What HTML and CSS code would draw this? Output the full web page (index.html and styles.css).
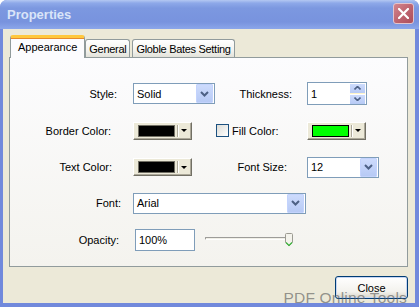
FILE: index.html
```html
<!DOCTYPE html>
<html lang="en">
<head>
  <meta charset="UTF-8" />
  <title>Properties</title>
  <link rel="stylesheet" href="styles.css">
</head>
<body>
  <div class="window">
    <div class="titlebar">
      <span class="title">Properties</span>
      <span class="close-x">
        <svg width="11" height="11" viewBox="0 0 11 11"><path d="M1 1 L10 10 M10 1 L1 10" stroke="#fff" stroke-width="2.2" stroke-linecap="square"/></svg>
      </span>
    </div>

    <div class="client">
      <!-- tabs -->
      <div class="tabs">
        <div class="tab active">Appearance</div>
        <div class="tab">General</div>
        <div class="tab">Globle Bates Setting</div>
      </div>

      <div class="panel">
        <div class="form">
          <label class="lbl">Style:</label>
          <div class="select w-style">
            <span class="value">Solid</span>
            <span class="drop"><svg width="9" height="6" viewBox="0 0 9 6"><path d="M1 1 L4.5 4.5 L8 1" stroke="#4d6185" stroke-width="2" fill="none"/></svg></span>
          </div>
          <label class="lbl lbl2">Thickness:</label>
          <div class="spin">
            <span class="value">1</span>
            <span class="spin-btns">
              <span class="spin-btn"><svg width="7" height="4" viewBox="0 0 7 4"><path d="M0.5 3.5 L3.5 0.5 L6.5 3.5" stroke="#4d6185" stroke-width="1.6" fill="none"/></svg></span>
              <span class="spin-btn"><svg width="7" height="4" viewBox="0 0 7 4"><path d="M0.5 0.5 L3.5 3.5 L6.5 0.5" stroke="#4d6185" stroke-width="1.6" fill="none"/></svg></span>
            </span>
          </div>

          <label class="lbl lbl-border">Border Color:</label>
          <div class="color-btn">
            <span class="swatch black"></span>
            <span class="sep"></span>
            <span class="arrow"></span>
          </div>
          <label class="check-lbl"><span class="checkbox"></span>Fill Color:</label>
          <div class="color-btn">
            <span class="swatch green"></span>
            <span class="sep"></span>
            <span class="arrow"></span>
          </div>

          <label class="lbl lbl-text">Text Color:</label>
          <div class="color-btn">
            <span class="swatch black"></span>
            <span class="sep"></span>
            <span class="arrow"></span>
          </div>
          <label class="lbl lbl2 lbl-size">Font Size:</label>
          <div class="select w-size">
            <span class="value">12</span>
            <span class="drop"><svg width="9" height="6" viewBox="0 0 9 6"><path d="M1 1 L4.5 4.5 L8 1" stroke="#4d6185" stroke-width="2" fill="none"/></svg></span>
          </div>

          <label class="lbl lbl-font">Font:</label>
          <div class="select w-font">
            <span class="value">Arial</span>
            <span class="drop"><svg width="9" height="6" viewBox="0 0 9 6"><path d="M1 1 L4.5 4.5 L8 1" stroke="#4d6185" stroke-width="2" fill="none"/></svg></span>
          </div>

          <label class="lbl lbl-opacity">Opacity:</label>
          <div class="opacity-row">
            <div class="textbox">100%</div>
            <div class="slider">
              <span class="track"></span>
              <svg class="thumb" width="8" height="14" viewBox="0 0 8 14">
                <path d="M0.5 1.5 Q0.5 0.5 1.5 0.5 L6.5 0.5 Q7.5 0.5 7.5 1.5 L7.5 9.5 L4 13 L0.5 9.5 Z" fill="#f4f3ec" stroke="#9c9b92"/>
                <path d="M1 9.5 L4 12.5 L7 9.5" fill="none" stroke="#3bb53b" stroke-width="1.2"/>
              </svg>
            </div>
          </div>
        </div>
      </div>

      <div class="footer">
        <button class="btn">Close</button>
      </div>

      <div class="watermark">PDF Online Tools</div>
    </div>
  </div>
</body>
</html>
```

FILE: styles.css
```css
body {
  margin: 0;
  background-color: #fff;
  font-family: 'Liberation Sans', Arial, sans-serif;
  font-size: 11px;
  color: #000;
}
.window {
  width: 419px;
  height: 307px;
  display: flex;
  flex-direction: column;
  background-color: #7189dc;
  border-radius: 7px 7px 0 0;
  overflow: hidden;
}
.titlebar {
  height: 29px;
  flex-shrink: 0;
  display: flex;
  align-items: center;
  justify-content: space-between;
  padding: 0 5px 0 7px;
  background: linear-gradient(#b4c8f2 0, #8ea9e9 3px, #7c98e0 8px, #7893de 22px, #8ba6ea 29px);
}
.title {
  font-weight: bold;
  font-size: 13px;
  color: #d9e4f8;
  padding-bottom: 1px;
}
.close-x {
  width: 19px;
  height: 19px;
  border: 1px solid #e3c4cc;
  border-radius: 3px;
  background: linear-gradient(135deg, #d3858e, #bb5f6b 60%, #ad4e5a);
  display: flex;
  align-items: center;
  justify-content: center;
  margin-bottom: 2px;
}
.client {
  flex: 1;
  position: relative;
  margin: 0 4px 4px 3px;
  padding: 6px 7px 0 6px;
  background-color: #ece9d8;
}

/* tabs */
.tabs {
  display: flex;
  align-items: flex-end;
  height: 22px;
  margin-left: 1px;
  position: relative;
  z-index: 1;
}
.tab {
  height: 17px;
  line-height: 18px;
  padding: 0 3px;
  margin-right: 2px;
  border: 1px solid #919b9c;
  border-bottom: none;
  border-radius: 3px 3px 0 0;
  background: linear-gradient(#fff, #f3f3ef 60%, #e3e2da);
  white-space: nowrap;
  letter-spacing: -0.3px;
}
.tab.active {
  height: 20px;
  line-height: 19px;
  padding: 0 7px;
  margin-right: 0;
  margin-bottom: -1px;
  border-top: 3px solid #ffc83c;
  box-shadow: inset 0 1px 0 #e68b2c;
  background: #fcfcfe;
  letter-spacing: 0;
}
.panel {
  box-sizing: border-box;
  height: 210px;
  border: 1px solid #919b9c;
  background: linear-gradient(#fcfcfe, #f4f3ee);
  padding-top: 17px;
}

/* form grid */
.form {
  display: grid;
  grid-template-columns: 123px 82px 92px auto;
  grid-template-rows: 37px 37px 36px 36px 37px;
  align-items: center;
}
.lbl {
  grid-column: 1;
  justify-self: end;
  padding-right: 16px;
}
.lbl2 {
  grid-column: 3;
  padding-right: 15px;
}
.lbl-border { padding-right: 22px; }
.lbl-text { padding-right: 21px; }
.lbl-font { padding-right: 12px; }
.lbl-opacity { padding-right: 14px; }
.lbl-size { padding-right: 20px; }

.select, .spin, .textbox {
  box-sizing: border-box;
  display: flex;
  align-items: center;
  background: #fff;
  border: 1px solid #7f9db9;
  padding-left: 3px;
}
.select {
  height: 21px;
  padding-right: 1px;
}
.select .value, .spin .value {
  flex: 1;
}
.w-style { width: 82px; }
.w-size { width: 72px; }
.w-font {
  width: 173px;
  grid-column: 2 / 4;
}
.drop {
  width: 15px;
  height: 17px;
  border: 1px solid #c3d3fd;
  border-radius: 1px;
  background: linear-gradient(#cddbfc, #b7caf5);
  display: flex;
  align-items: center;
  justify-content: center;
}
.spin {
  width: 60px;
  height: 23px;
  padding-right: 1px;
}
.spin-btns {
  display: flex;
  flex-direction: column;
  gap: 1px;
}
.spin-btn {
  width: 15px;
  height: 9px;
  background: linear-gradient(#cddbfc, #b7caf5);
  display: flex;
  align-items: center;
  justify-content: center;
}
.spin-btn:first-child {
  border-bottom: 1px solid #fff5c8;
}

/* colour picker buttons */
.color-btn {
  box-sizing: border-box;
  width: 59px;
  height: 18px;
  display: flex;
  align-items: center;
  padding: 0 4px;
  background: #ece9d8;
  border-top: 1px solid #fff;
  border-left: 1px solid #fff;
  border-right: 1px solid #716f64;
  border-bottom: 1px solid #716f64;
  box-shadow: inset -1px -1px 0 #aca899;
}
.swatch {
  width: 40px;
  height: 10px;
  border: 1px solid #716f64;
}
.swatch.black { background: #000; }
.swatch.green { background: #00ff00; border-color: #000; }
.sep {
  width: 1px;
  height: 12px;
  margin-left: 2px;
  background: #aca899;
  border-right: 1px solid #fff;
}
.arrow {
  margin-left: 2px;
  width: 0;
  height: 0;
  border-left: 3px solid transparent;
  border-right: 3px solid transparent;
  border-top: 3px solid #000;
}

.check-lbl {
  grid-column: 3;
  display: flex;
  align-items: center;
  gap: 3px;
  padding-left: 1px;
}
.checkbox {
  width: 11px;
  height: 11px;
  border: 1px solid #1c5180;
  background: linear-gradient(135deg, #dcdcd7, #fff);
}

/* opacity */
.opacity-row {
  grid-column: 2 / 5;
  display: flex;
  align-items: center;
  padding-left: 2px;
}
.textbox {
  width: 60px;
  height: 22px;
}
.slider {
  position: relative;
  width: 88px;
  height: 14px;
  margin-left: 10px;
}
.track {
  position: absolute;
  left: 0;
  right: 2px;
  top: 4px;
  height: 1px;
  border: 1px solid #9d9c99;
  border-right-color: #fff;
  border-bottom-color: #fff;
  background: #f0efe6;
  border-radius: 1px;
}
.thumb {
  position: absolute;
  right: 0;
  top: 0;
}

.footer {
  display: flex;
  justify-content: flex-end;
  margin-top: 9px;
}
.btn {
  width: 73px;
  height: 23px;
  font-family: 'Liberation Sans', Arial, sans-serif;
  font-size: 11px;
  color: #000;
  border: 1px solid #003c74;
  border-radius: 3px;
  background: linear-gradient(#fff, #f3f2ed 70%, #d8d4c8);
  box-shadow: inset 0 0 0 1px #c6d6f3;
  padding: 0;
}
.watermark {
  position: absolute;
  right: 8px;
  bottom: -3px;
  font-size: 15.5px;
  line-height: 16px;
  color: rgba(95, 95, 95, 0.65);
  letter-spacing: 0.2px;
  pointer-events: none;
}
```
